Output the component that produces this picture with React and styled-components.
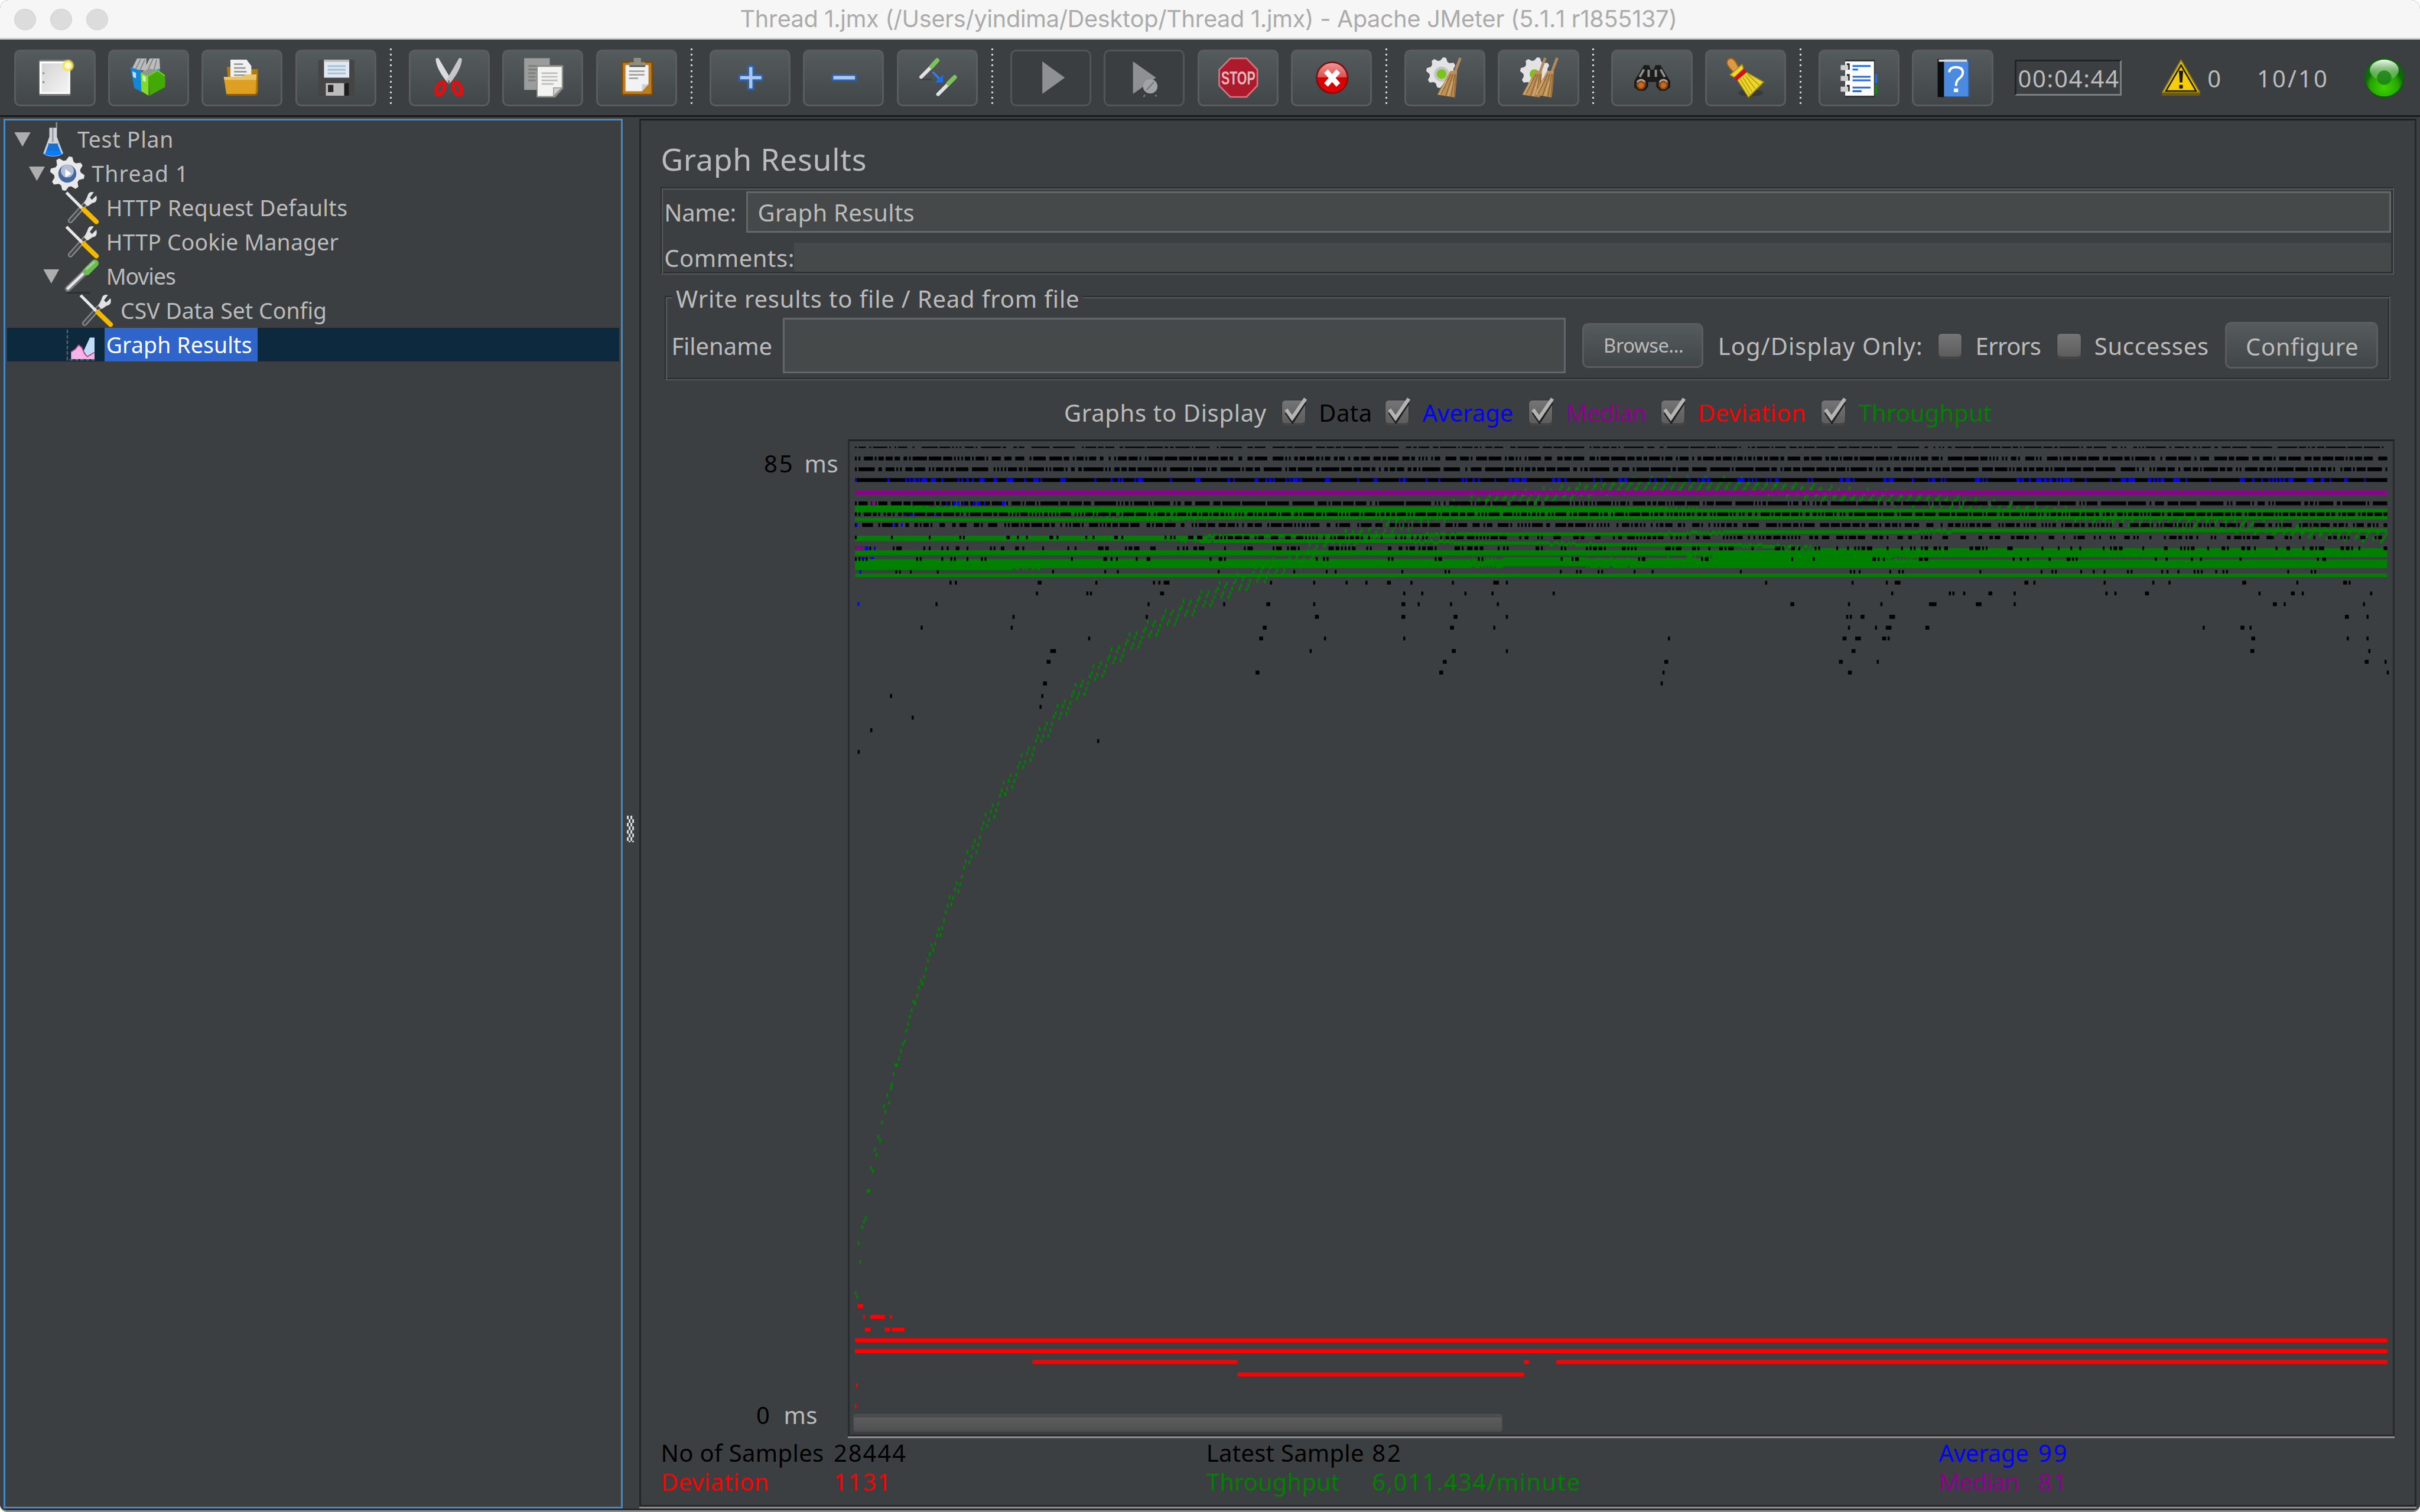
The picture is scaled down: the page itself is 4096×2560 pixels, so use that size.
import React, { useLayoutEffect, useRef, useState } from "react";
import styled, { createGlobalStyle, css } from "styled-components";

/* Sizes are written in the window's native pixels and scaled to the viewport. */
const K = 4096 / 5376;
const r = (n) => `${(n * K).toFixed(3)}px`;

const C = {
  bg: "#3c3f41",
  text: "#bbbbbb",
  dark: "#1e2022",
  line: "#292b2d",
  etchDark: "#2b2d2e",
  etchLight: "#555759",
  field: "#45494a",
  fieldBorder: "#646667",
  blue: "#0000ff",
  purple: "#8f008f",
  red: "#ff0000",
  green: "#008000",
};

const Global = createGlobalStyle`
  * { box-sizing: border-box; }
  html, body { margin: 0; padding: 0; background: #ffffff; overflow: hidden; }
`;

/* ---------- text ---------- */

const TextBox = styled.span`
  display: inline-block;
  flex: none;
  width: ${(p) => (p.$w ? r(p.$w) : "auto")};
  padding-top: ${(p) => (p.$ui || p.$size < 50 ? 0 : r(3))};
  font-family: ${(p) => (p.$ui ? "Inter, sans-serif" : '"Noto Sans", "Open Sans", sans-serif')};
  font-kerning: ${(p) => (p.$ui ? "none" : "auto")};
  font-size: ${(p) => r(p.$size)};
  line-height: 1;
  color: ${(p) => p.$color};
  white-space: pre;
`;

function Text({ w, size = 52.5, color = C.text, ui, children }) {
  const ref = useRef(null);
  const [spacing, setSpacing] = useState(0);
  useLayoutEffect(() => {
    if (!w || !ref.current) return;
    const natural = ref.current.getBoundingClientRect().width - spacing * children.length;
    setSpacing((w * K - natural) / Math.max(1, children.length - 1));
  }, [w, children]);
  return (
    <TextBox $w={w} $size={size} $color={color} $ui={ui}>
      <span ref={ref} style={{ letterSpacing: spacing }}>{children}</span>
    </TextBox>
  );
}

/* ---------- window ---------- */

const Window = styled.div`
  width: ${r(5376)};
  height: ${r(3360)};
  display: flex;
  flex-direction: column;
  background: ${C.bg};
  border-radius: ${r(20)} ${r(20)} ${r(16)} ${r(16)};
  border-bottom: ${r(4)} solid #8b8b8b;
  overflow: hidden;
`;

const TitleBar = styled.header`
  height: ${r(88)};
  flex: none;
  display: flex;
  align-items: center;
  background: #f6f6f6;
  border-bottom: ${r(4)} solid #cfd1cf;
  padding-left: ${r(32)};
  padding-top: ${r(3)};
`;

const Lights = styled.div`
  display: flex;
  gap: ${r(32)};
  width: ${r(1612)};
`;

const Light = styled.i`
  width: ${r(48)};
  height: ${r(48)};
  border-radius: 50%;
  background: #dcdcdc;
  border: ${r(2)} solid #cfcfcf;
`;

const Toolbar = styled.div`
  height: ${r(172)};
  flex: none;
  display: flex;
  align-items: center;
  gap: ${r(28)};
  padding-left: ${r(32)};
  padding-top: ${r(2)};
  border-bottom: ${r(4)} solid #17191b;
`;

const raised = css`
  background: linear-gradient(#555a5c, #414648);
  border: ${r(4)} solid #5a5c5d;
  border-radius: ${r(13)};
`;

const ToolButton = styled.button`
  ${raised}
  width: ${r(180)};
  height: ${r(126)};
  flex: none;
  padding: 0;
  display: flex;
  align-items: center;
  justify-content: center;
  ${(p) => p.$off && `background: #3b3e40; border-color: #525456;`}
`;

const IconSvg = styled.svg`
  width: ${(p) => r(p.$s || 88)};
  height: ${(p) => r(p.$s || 88)};
  display: block;
  flex: none;
  overflow: visible;
`;

const Separator = styled.i`
  width: ${r(16)};
  height: ${r(128)};
  flex: none;
  margin-top: ${r(-4)};
  background: repeating-linear-gradient(#d4d4d4 0 ${r(4)}, transparent ${r(4)} ${r(12)}) ${r(2)} 0 / ${r(4)} 100% no-repeat;
`;

const Timer = styled.div`
  width: ${r(238)};
  height: ${r(80)};
  margin-left: ${r(20)};
  display: flex;
  align-items: center;
  justify-content: center;
  border-style: solid;
  border-width: ${r(4)};
  border-color: #202224 #7b7f81 #7b7f81 #202224;
`;

const Status = styled.div`
  display: flex;
  align-items: center;
  margin-left: ${(p) => r(p.$ml)};
  gap: ${r(15)};
`;

/* ---------- body ---------- */

const Body = styled.div`
  flex: 1;
  min-height: 0;
  display: flex;
  padding: ${r(4)} ${r(8)} 0 ${r(8)};
  border-bottom: ${r(4)} solid ${C.line};
`;

const Tree = styled.ul`
  margin: 0;
  list-style: none;
  width: ${r(1376)};
  flex: none;
  border: ${r(4)} solid #4389c9;
  padding: ${r(4)};
`;

const TreeRow = styled.li`
  height: ${r(76)};
  display: flex;
  align-items: center;
  padding-left: ${(p) => r(16 + 32 * p.$depth)};
  background: ${(p) => (p.$selected ? "#0d293e" : "transparent")};
`;

const Arrow = styled.i`
  width: ${r(36)};
  height: ${r(32)};
  margin-right: ${r(12)};
  background: ${(p) => (p.$open ? "#adadad" : "transparent")};
  clip-path: polygon(0 0, 100% 0, 50% 100%);
`;

const TreeLabel = styled.span`
  height: 100%;
  display: flex;
  align-items: center;
  margin-left: ${r(12)};
  padding: 0 ${r(12)} 0 ${r(4)};
  background: ${(p) => (p.$selected ? "#2f65ca" : "transparent")};
`;

const Splitter = styled.div`
  width: ${r(36)};
  flex: none;
  display: flex;
  align-items: center;
  justify-content: center;
  padding-top: ${r(68)};
  padding-right: ${r(4)};
`;

const Main = styled.main`
  flex: 1;
  display: flex;
  flex-direction: column;
  border: ${r(4)} solid #242628;
  border-top-color: ${C.dark};
  box-shadow: 0 ${r(4)} 0 #8b8b8b;
  margin-bottom: ${r(4)};
  padding: 0 ${r(44)};
`;

const Heading = styled.div`
  height: ${r(148)};
  flex: none;
  display: flex;
  align-items: center;
  padding: ${r(22)} 0 0 ${r(0)};
`;

const etched = css`
  border-style: solid;
  border-width: ${r(3)};
  border-color: ${C.etchDark} ${C.etchLight} ${C.etchLight} ${C.etchDark};
  box-shadow: inset ${r(3)} ${r(3)} 0 ${C.etchLight}, inset ${r(-3)} ${r(-3)} 0 ${C.etchDark};
`;

const NameBox = styled.section`
  ${etched}
  height: ${r(194)};
  flex: none;
  margin-right: ${r(2)};
  padding: ${r(7)} ${r(4)} 0 ${r(5)};
  display: flex;
  flex-direction: column;
  gap: ${r(22)};
`;

const FormRow = styled.label`
  display: flex;
  align-items: center;
  height: ${(p) => r(p.$h)};
  gap: ${(p) => r(p.$gap)};
`;

const Field = styled.div`
  flex: ${(p) => (p.$w ? "none" : 1)};
  width: ${(p) => (p.$w ? r(p.$w) : "auto")};
  height: 100%;
  margin-left: ${(p) => r(p.$ml || 0)};
  display: flex;
  align-items: center;
  background: ${C.field};
  border: ${(p) => (p.$plain ? "0" : `${r(4)} solid ${C.fieldBorder}`)};
  padding-left: ${r(22)};
`;

const FileBox = styled.section`
  ${etched}
  position: relative;
  height: ${r(188)};
  flex: none;
  margin: ${r(48)} ${r(10)} 0 ${r(8)};
  padding: ${r(45)} 0 0 ${r(13)};
`;

const Legend = styled.span`
  position: absolute;
  top: ${r(-28)};
  left: ${r(15)};
  padding: 0 ${r(8)} 0 ${r(8)};
  background: ${C.bg};
  height: ${r(60)};
  display: flex;
  align-items: center;
`;

const FileRow = styled.div`
  height: ${r(124)};
  display: flex;
  align-items: center;
`;

const Button = styled.button`
  ${raised}
  width: ${(p) => r(p.$w)};
  height: ${(p) => r(p.$h)};
  margin: 0 ${(p) => r(p.$mr || 0)} 0 ${(p) => r(p.$ml)};
  padding: ${r(2)} 0 0 ${r(3)};
  flex: none;
  display: flex;
  align-items: center;
  justify-content: center;
`;

const CheckWrap = styled.label`
  display: flex;
  align-items: center;
  gap: ${r(29)};
  margin-left: ${(p) => r(p.$ml)};
`;

const CheckBox = styled.span`
  width: ${r(54)};
  height: ${r(54)};
  border-radius: ${r(9)};
  border: ${r(2)} solid #323435;
  background: linear-gradient(#757575, #5c5c5c);
  box-shadow: 0 ${r(3)} 0 #47494a;
  display: flex;
  align-items: center;
  justify-content: center;
`;

const GraphsRow = styled.div`
  height: ${r(130)};
  flex: none;
  display: flex;
  align-items: center;
  padding: ${r(9)} 0 0 ${r(896)};
`;

const ChartRow = styled.div`
  height: ${r(2220)};
  flex: none;
  display: flex;
`;

const Axis = styled.div`
  width: ${r(416)};
  flex: none;
  display: flex;
  flex-direction: column;
  justify-content: space-between;
  padding: ${r(25)} 0 ${r(25)};
`;

const AxisLabel = styled.div`
  display: flex;
  gap: ${(p) => r(p.$gap)};
  padding-left: ${(p) => r(p.$pl)};
`;

const ChartPanel = styled.div`
  flex: 1;
  display: flex;
  flex-direction: column;
  border: ${r(4)} solid ${C.line};
  border-top-color: ${C.dark};
  box-shadow: 0 ${r(4)} 0 #8b8b8b;
  margin-bottom: ${r(4)};
  padding-left: ${r(8)};
`;

const ChartSvg = styled.svg`
  width: ${r(3420)};
  height: ${r(2160)};
  display: block;
`;

const ScrollThumb = styled.div`
  width: ${r(1442)};
  height: ${r(40)};
  margin-top: ${r(2)};
  border: ${r(3)} solid #4c4e4f;
  border-radius: ${r(6)};
  background: linear-gradient(#4a4b4c 0 ${r(5)}, #5d5d5d ${r(6)}, #505050);
`;

const Stats = styled.div`
  display: grid;
  grid-template-columns: ${r(384)} ${r(828)} ${r(368)} ${r(1259)} ${r(221)} 1fr;
  grid-auto-rows: ${r(64)};
  align-items: center;
`;

/* ---------- toolbar icons ---------- */

const Bristles = ({ x }) => (
  <g transform={`translate(${x} 0)`}>
    <path d="M19.6 0 16.6 8" stroke="#b08a5c" strokeWidth="1.5" />
    <path d="M14 7.2h3.8l-.3 5L16.6 22l-9.8-1.6z" fill="#bd9056" />
    <path d="M14.5 9 8.8 20M15.5 9l-4 12M16.5 9l-2 12.6M17.3 9l-1.2 12.6" stroke="#8a6236" strokeWidth=".5" />
    <path d="M12 12.5 8 20.4M15.4 13l-2.6 8" stroke="#dcb47a" strokeWidth=".5" />
  </g>
);

const teeth = (n, cx, cy, r1, r2) =>
  Array.from({ length: n * 4 }, (_, i) => {
    const a = ((i + 0.5) / (n * 4)) * Math.PI * 2;
    const rad = i % 4 < 2 ? r1 : r2;
    return `${(cx + rad * Math.cos(a)).toFixed(2)},${(cy + rad * Math.sin(a)).toFixed(2)}`;
  }).join(" ");

const ICONS = {
  new: (
    <>
      <defs>
        <linearGradient id="pg" x2="1" y2="1"><stop stopColor="#d4d4d4" /><stop offset="1" stopColor="#f4f4f4" /></linearGradient>
        <radialGradient id="glow"><stop offset=".3" stopColor="#fffde0" /><stop offset=".65" stopColor="#f3e34f" /><stop offset="1" stopColor="#f3e34f" stopOpacity="0" /></radialGradient>
      </defs>
      <path d="M2.4 1h17.4v20H2.4z" fill="#7d7d7b" />
      <path d="M2.6 2h17v18h-17z" fill="#fff" />
      <path d="M3.8 3h15v16h-15z" fill="url(#pg)" />
      <path d="M4.3 8.5h1M4.3 13.5h1" stroke="#8b8b8b" />
      <circle cx="18.4" cy="4.3" r="3.7" fill="url(#glow)" />
    </>
  ),
  templates: (
    <>
      <path d="M1.5 6.5 4.6.3h5.2L9.6 7zM8 7.5 11.6.3H17l.4 6-4 3z" fill="#bcbcbc" />
      <path d="M3.4 7 6.6.8M6 7.4 8.8 1M10 8l3.4-7.4M13.5 8.5 15.5 1" stroke="#858585" strokeWidth=".6" />
      <path d="M.8 5 7.5 7.5V19l-4.4-2.2z" fill="#1486d8" />
      <path d="M2 7.5l2 .8v3l-1.6-.6z" fill="#bfe4ff" />
      <path d="M13 7.3l4-1.5V9l-3 1z" fill="#2c95dd" />
      <path d="M6.6 8.2 11 10v11L7 18.5z" fill="#7fdc2a" />
      <path d="M6.6 8.2 11.4 6l4.6 1-5 3z" fill="#8d9a8a" />
      <path d="M11 10l5-3 4.2 3.4v5.8L11.5 21z" fill="#43a905" />
      <path d="M7.6 9.6l1.8.8v3l-1.6-.7z" fill="#d9f7b4" />
      <path d="M11 10l5-3 4 3" fill="none" stroke="#6bd419" strokeWidth=".7" />
    </>
  ),
  open: (
    <>
      <path d="M2.6 5h5L9 6.2h10.8v13L18 21H4z" fill="#b5780b" />
      <path d="M4.6 1h9l2.6 3.5V13H4.6z" fill="#f1f1f1" />
      <path d="M6.6 3.5h5M6.6 5.6h6.4M6.6 7.7h7M6.6 9.6h7.6" stroke="#9a9a9a" strokeWidth=".9" />
      <path d="M.9 10.6h10l2-1.4h6.2l-.6 11.2H2.4z" fill="#dda022" />
      <path d="M.9 10.6h10l2-1.4h6.2l-.2 3H1.2z" fill="#ecc464" />
      <path d="M2.4 20h16.2l1.2-1-.4 1.9H2.6z" fill="#8d5c05" />
    </>
  ),
  save: (
    <>
      <rect x="1.3" y="1" width="20" height="20" rx="1" fill="#474446" />
      <path d="M4.4 1h14v10h-14z" fill="#dfe9f4" />
      <path d="M4.4 1h14v1.2h-14z" fill="#b9babd" />
      <path d="M6.4 4.6h10M6.4 6.6h10M6.4 8.6h10" stroke="#a9bfd4" strokeWidth="1" />
      <path d="M5.4 14h11.4v7H5.4z" fill="#bdbdbd" />
      <path d="M6.6 15h3v4h-3z" fill="#2a2829" />
      <path d="M15.6 14h2.6v7h-2.6z" fill="#1f1e1f" />
    </>
  ),
  cut: (
    <>
      <path d="M3.4.4 4.9 0 12.4 12.6 10 13.8C6.6 9.6 3.6 5 3.4.4z" fill="#dcdcdc" />
      <path d="M18 .4 16.5 0 9.2 12.6l2.4 1.2C15 9.6 17.8 5 18 .4z" fill="#c6c6c6" />
      <path d="M10.7 12.5v2" stroke="#777" />
      <ellipse cx="6" cy="17" rx="2" ry="3.6" transform="rotate(26 6 17)" fill="none" stroke="#d81313" strokeWidth="2.3" />
      <ellipse cx="15.4" cy="17" rx="2" ry="3.6" transform="rotate(-26 15.4 17)" fill="none" stroke="#d81313" strokeWidth="2.3" />
    </>
  ),
  copy: (
    <>
      <path d="M.7.2h14.2v17.6H.7z" fill="#9b9c9c" />
      <path d="M3 4.5h9M3 6.5h5M3 8.5h4M3 10.5h4M3 12.5h4" stroke="#7c7d7d" strokeWidth=".9" />
      <path d="M7.6 4h14.8v13L18 22H7.6z" fill="#8e8f89" />
      <path d="M8.2 5h13.4v11.4L17 21.2H8.2z" fill="#f3f3f1" />
      <path d="M10.4 8.5h8.8M10.4 10.5h8.8M10.4 12.5h8.8M10.4 14.5h6.6" stroke="#bdbdbb" strokeWidth=".9" />
      <path d="M17 21.2v-4.6h4.6z" fill="#cfcfca" stroke="#8e8f89" strokeWidth=".4" />
    </>
  ),
  paste: (
    <>
      <rect x="2.6" y="2" width="17.4" height="19" rx=".8" fill="#7a4c08" />
      <rect x="3.4" y="2.8" width="15.8" height="17.2" fill="#bd7b22" />
      <path d="M4.8 4h12.8v10.5L14 18.5H4.8z" fill="#f2f2f2" />
      <path d="M6.8 7.4h8.6M6.8 9.4h8.6M6.8 11.4h5" stroke="#a3a3a3" strokeWidth=".9" />
      <path d="M14 18.5v-3.8h3.6z" fill="#cfcfcf" />
      <path d="M7 5V2.4h2.4V0h4v2.4h2.4V5z" fill="#8e8e82" />
      <path d="M7 4.2h8.8V5H7z" fill="#55554e" />
    </>
  ),
  plus: (
    <>
      <path d="M9.4 4h4v5h5v4h-5v5h-4v-5h-5V9h5z" fill="#2f62aa" />
      <path d="M10.5 5.1h1.8v5h5v1.8h-5v5h-1.8v-5h-5v-1.8h5z" fill="#a9c8ee" />
    </>
  ),
  minus: (
    <>
      <path d="M4.4 9h14v4h-14z" fill="#2f62aa" />
      <path d="M5.4 10h12v2h-12z" fill="#a9c8ee" />
    </>
  ),
  toggle: (
    <>
      <path d="M1.8 12h6" stroke="#3a3e40" strokeWidth=".8" />
      <path d="M2 10.6 7.6 5" stroke="#e2e2e2" strokeWidth="2" strokeLinecap="round" />
      <path d="M7.8 4.8 10.9 1.4" stroke="#7cc35a" strokeWidth="2.5" strokeLinecap="round" />
      <path d="M11.4 20.2 17 14.6" stroke="#e2e2e2" strokeWidth="2" strokeLinecap="round" />
      <path d="M17.2 14.2 20.6 10.8" stroke="#7cc35a" strokeWidth="2.5" strokeLinecap="round" />
      <path d="M8.4 7.8 12.4 12" stroke="#2f7ff0" strokeWidth="1.2" />
      <path d="M14.2 9.2v4.5H9.6z" fill="#1a6ff0" />
    </>
  ),
  play: <path d="M6.3 2v18L18.8 11z" fill="#8f9091" />,
  playTimer: (
    <>
      <path d="M4.8 2v18L17.6 11z" fill="#8f9091" />
      <circle cx="14.4" cy="15.8" r="4" fill="#a2a3a4" />
      <path d="M12.4 17.8 16.4 13.4M11.6 20.6l-1 1M17.2 20.6l.8.8" stroke="#7b7c7d" strokeWidth=".8" />
    </>
  ),
  stop: (
    <>
      <path d="M6.7.3h9L21.7 6.6v8.8l-6 6.3h-9L.5 15.4V6.6z" fill="#ad1a2c" stroke="#cc7680" strokeWidth=".9" />
      <text x="11.1" y="14.7" textAnchor="middle" fontFamily="Liberation Sans, sans-serif" fontWeight="700" fontSize="10.4" textLength="19" lengthAdjust="spacingAndGlyphs" fill="#eab4bb">STOP</text>
    </>
  ),
  shutdown: (
    <>
      <defs><linearGradient id="sd" x2="0" y2="1"><stop stopColor="#ef9a9a" /><stop offset=".48" stopColor="#e05050" /><stop offset=".5" stopColor="#d40000" /><stop offset="1" stopColor="#e80000" /></linearGradient></defs>
      <circle cx="11.4" cy="11" r="8.6" fill="url(#sd)" stroke="#7c1010" strokeWidth=".9" />
      <path d="M8 7.4 14.8 15M14.8 7.4 8 15" stroke="#fff" strokeWidth="2.9" />
    </>
  ),
  clear: (
    <>
      <polygon points={teeth(8, 9.2, 8.2, 8.6, 6.8)} fill="#e3e3e3" />
      <circle cx="9.2" cy="9" r="4.2" fill="#c4c4c4" />
      <circle cx="9.2" cy="9" r="2.7" fill="#7cc41c" />
      <Bristles x={0} />
    </>
  ),
  clearAll: (
    <>
      <polygon points={teeth(8, 9.2, 8.2, 8.6, 6.8)} fill="#e3e3e3" />
      <circle cx="8.6" cy="9" r="2.7" fill="#7cc41c" />
      <Bristles x={-5} />
      <Bristles x={1.6} />
    </>
  ),
  search: (
    <>
      <path d="M6.4 4h2.8l1 2.6h1.6l1-2.6h2.8l5.4 9v3.4l-2.6 1.8h-3.2L13.2 16v-2.6h-4.4V16l-2 2.2H3.6L1 16.4V13z" fill="#1c1c1c" />
      <path d="M6.4 6.4 4 10.6M9 6.6v4M15.6 6.4l2.4 4.2M13 6.6v4" stroke="#8c8c8c" strokeWidth="1.3" />
      <ellipse cx="4.8" cy="14.6" rx="3" ry="3.3" fill="#8a4a18" stroke="#1c1c1c" strokeWidth=".7" />
      <ellipse cx="17.2" cy="14.6" rx="3" ry="3.3" fill="#8a4a18" stroke="#1c1c1c" strokeWidth=".7" />
      <path d="M2.6 13.4q2.2-2.4 4.4 0M15 13.4q2.2-2.4 4.4 0" stroke="#b9a090" strokeWidth=".9" fill="none" />
      <ellipse cx="4.8" cy="15.2" rx="1.5" ry="1.5" fill="#c96a1e" />
      <ellipse cx="17.2" cy="15.2" rx="1.5" ry="1.5" fill="#c96a1e" />
    </>
  ),
  broom: (
    <>
      <ellipse cx="14" cy="19.4" rx="7" ry="2" fill="#2e3233" opacity=".6" />
      <path d="M.6 2.6Q.8.2 3.2.2 5.4.8 7.6 6.4L5 8.6Q.6 4.6.6 2.6z" fill="#dc9a44" stroke="#9a5d17" strokeWidth=".7" />
      <path d="M2.4 9.4 9 3.6 10.4 7.4 21 13.4 12.6 21.8 6 11.6z" fill="#ecd829" stroke="#a89012" strokeWidth=".6" />
      <path d="M8 11.6l5.4 8.8M9.6 11l5 8M11 10l5.4 7.2M12 9l6.6 6.2" stroke="#b49b14" strokeWidth=".5" />
      <path d="M4.6 10.8 10 5.8 11.6 8 6 12.8z" fill="#cf1414" />
    </>
  ),
  notebook: (
    <>
      <path d="M18.5 9h2.6v5h-2.6z" fill="#2a6fe0" />
      <path d="M18.5 15h2.6v5h-2.6z" fill="#118a12" />
      <path d="M3.3 1h16.6v21H3.3z" fill="#33373a" />
      <path d="M3.3 2h16v19h-16z" fill="#fbfbfb" />
      <path d="M4.2 3h1.6v3.6H4.2zM4.2 9h1.6v3.6H4.2zM4.2 15h1.6v3.6H4.2z" fill="#222" />
      <path d="M.8 4h4.2v2.8H.8zM.8 10h4.2v2.8H.8zM.8 16h4.2v2.8H.8z" fill="#cfcfcf" />
      <path d="M7.4 4.5h10M7.4 6.5h3M7.4 10.5h10M7.4 12.5h10M7.4 16.5h10M7.4 18.5h5" stroke="#2268e8" strokeWidth="1" />
    </>
  ),
  help: (
    <>
      <path d="M2.8.4h18v21.2h-18z" fill="#39597f" />
      <path d="M2.8.6h3.6v21.2H2.8z" fill="#0c0d0e" />
      <path d="M6.4 2h13.4v19.4H6.4z" fill="#4a8ae0" />
      <path d="M3.4.9h15.8v1.2H3.4z" fill="#dcdcdc" />
      <path d="M9.2 8Q9.4 5.2 13 5.2T16.8 8Q16.8 10 14.6 11.6 13 13 13 15.6" stroke="#fff" strokeWidth="1.3" fill="none" />
      <path d="M11.8 17h2.4v2h-2.4z" fill="#fff" />
    </>
  ),
};

const WarningIcon = () => (
  <IconSvg viewBox="0 0 22 22">
    <path d="M11 1.2 21.6 19.6V21H.4V19.6z" fill="#6b5a10" />
    <path d="M11 1.2 21.4 19.2H.6z" fill="#f4cf08" stroke="#8f7a0c" strokeWidth=".7" strokeLinejoin="round" />
    <path d="M11 4 19.4 18.4H2.6z" fill="none" stroke="#2a2405" strokeWidth=".9" />
    <path d="M10.1 7.4h1.8l-.4 6h-1z" fill="#1b1804" stroke="#1b1804" strokeWidth=".5" />
    <path d="M10 15h2v2h-2z" fill="#1b1804" />
  </IconSvg>
);

const BallIcon = () => (
  <IconSvg viewBox="0 0 22 22">
    <defs>
      <radialGradient id="ball" cy=".75"><stop stopColor="#3fd400" /><stop offset=".75" stopColor="#26a400" /><stop offset="1" stopColor="#0c6a08" /></radialGradient>
      <linearGradient id="shine" x2="0" y2="1"><stop stopColor="#f2faee" /><stop offset="1" stopColor="#6cc35c" stopOpacity=".35" /></linearGradient>
    </defs>
    <circle cx="11" cy="11" r="10.7" fill="url(#ball)" stroke="#0b6208" strokeWidth=".6" />
    <ellipse cx="11" cy="6.8" rx="8" ry="5.8" fill="url(#shine)" />
    <circle cx="11" cy="11" r="4" fill="#1a7d16" opacity=".8" />
  </IconSvg>
);

/* ---------- tree icons (19 x 19) ---------- */

const TREE_ICONS = {
  flask: (
    <>
      <path d="M11.4 0v3" stroke="#8a8f93" strokeWidth=".8" />
      <path d="M7.4 3h4.2v5l3.4 9.4Q13 19 9.5 19T4 17.4L7.4 8z" fill="#cfd4da" />
      <path d="M6.6 11.8h5.8l2.2 5.6Q12.6 18.6 9.5 18.6T4.4 17.4z" fill="#1272d8" />
      <path d="M5 15.8h9l.5 1.8Q12 18.8 9.5 18.8T4.5 17.6z" fill="#0a7cff" />
      <path d="M9.3 3v8" stroke="#8f979e" strokeWidth=".8" />
      <path d="M6.6 12 4.6 17.4M12.4 12l2.2 5.4" stroke="#b9d6f7" strokeWidth=".9" />
    </>
  ),
  gear: (
    <>
      <polygon points={teeth(8, 9.5, 9.5, 9.6, 7.4)} fill="#e9e9e9" />
      <circle cx="9.5" cy="9.5" r="5" fill="#46689f" />
      <circle cx="9.5" cy="8" r="3.6" fill="#b4bfd4" />
      <path d="M8.4 7v4.6L11.8 9.5z" fill="#fff" />
    </>
  ),
  tools: (
    <>
      <path d="M3 16.6 12 6.6" stroke="#8c8c8c" strokeWidth="2.8" strokeLinecap="round" />
      <path d="M3 16.6 11 7.6" stroke="#474a4b" strokeWidth="1.4" strokeLinecap="round" />
      <path d="M17.4 2.6 15 5 13.8 3.8 16 .8Q13 0 12.4 3.2L10.6 7l2 1.6 2.6-1.8Q18.4 6.4 17.4 2.6z" fill="#e3e3e3" />
      <path d="M.8 1 9.8 10" stroke="#e8e8e8" strokeWidth="1.6" />
      <path d="M10.4 10.4 17.4 17.2" stroke="#f2b900" strokeWidth="2.7" strokeLinecap="round" />
    </>
  ),
  sampler: (
    <>
      <path d="M1 18.6h13" stroke="#2d3031" strokeWidth="1" />
      <path d="M1.6 16.4 11.6 6.8" stroke="#777b7d" strokeWidth="3.4" strokeLinecap="round" />
      <path d="M1.6 16.2 11.4 6.8" stroke="#e8e8e8" strokeWidth="1.5" strokeLinecap="round" />
      <path d="M12 6.8 16.6 2.2" stroke="#6cb955" strokeWidth="4.2" strokeLinecap="round" />
      <path d="M12 5.4 16.2 1.6" stroke="#9ad684" strokeWidth="1.2" strokeLinecap="round" />
    </>
  ),
  graph: (
    <>
      <path d="M1.3 1v16.8H17" stroke="#54606c" strokeWidth=".8" fill="none" strokeDasharray="2 1" />
      <path d="M16.4 5.4h-2.6l-3.4 7.4 2.4 4 3.6-2z" fill="#bfdcf8" />
      <path d="M3.4 17.4V13.4L5.6 12l2-2.4 1.6 1.2 1.8 3.8 1.4 1.4 4-2.4v3.8z" fill="#f5b4ea" />
      <path d="M3.4 13.4 5.6 12l2-2.4 1.6 1.2 1.8 3.8 1.4 1.4 4-2.4" fill="none" stroke="#c8467e" strokeWidth=".6" />
    </>
  ),
};

const ROWS = [
  { label: "Test Plan", icon: "flask", depth: 0, open: true, w: 213 },
  { label: "Thread 1", icon: "gear", depth: 1, open: true, w: 214 },
  { label: "HTTP Request Defaults", icon: "tools", depth: 2, w: 536 },
  { label: "HTTP Cookie Manager", icon: "tools", depth: 2, w: 516 },
  { label: "Movies", icon: "sampler", depth: 2, open: true, w: 155 },
  { label: "CSV Data Set Config", icon: "tools", depth: 3, w: 458 },
  { label: "Graph Results", icon: "graph", depth: 2, selected: true, w: 324 },
];

const TOOLS = [
  ["new", "templates", "open", "save"],
  ["cut", "copy", "paste"],
  ["plus", "minus", "toggle"],
  ["play", "playTimer", "stop", "shutdown"],
  ["clear", "clearAll"],
  ["search", "broom"],
  ["notebook", "help"],
];
const DISABLED = ["play", "playTimer"];

/* ---------- chart ---------- */

const X0 = 1900;
const X1 = 5304;

function random(seed) {
  let s = seed;
  return () => {
    s = (s * 1664525 + 1013904223) % 4294967296;
    return s / 4294967296;
  };
}

const box = (x, y, w, h) => `M${x} ${y}h${w}v${h}h${-w}z`;

function dashes(seed, y, maxRun, maxGap, h = 8.5, from = X0, to = X1) {
  const rnd = random(seed);
  let x = from;
  let d = "";
  while (x < to) {
    const run = 4 * (1 + Math.floor(rnd() ** 2 * maxRun));
    d += box(x, y, Math.min(run, to - x), h);
    x += run + 4 * (1 + Math.floor(rnd() ** 3 * maxGap));
  }
  return d;
}

/* Each stop is [x, top, bottom]; neighbouring levels mix around a stop. */
function band(seed, stops) {
  const rnd = random(seed);
  let d = "";
  let start = X0;
  let cur = stops[0];
  for (let x = X0; x <= X1; x += 4) {
    const probe = x + (rnd() - 0.5) * 130;
    let level = stops[0];
    for (const s of stops) if (probe >= s[0]) level = s;
    if (level !== cur || x + 4 > X1) {
      if (x > start) d += box(start, cur[1], x - start, cur[2] - cur[1]);
      start = x;
      cur = level;
    }
  }
  return d;
}

const CURVE = [
  [1908, 2761], [1920, 2712], [1930, 2645], [1938, 2597], [1946, 2559], [1954, 2529], [1960, 2494], [1966, 2464],
  [1974, 2441], [1980, 2412], [1986, 2379], [1994, 2356], [2004, 2325], [2012, 2284], [2023, 2253], [2036, 2209],
  [2056, 2150], [2072, 2102], [2088, 2063], [2108, 2009], [2125, 1970], [2148, 1913], [2164, 1880], [2190, 1826],
  [2207, 1796], [2232, 1752], [2271, 1694], [2309, 1638], [2355, 1580], [2389, 1541], [2431, 1497], [2470, 1461],
  [2508, 1430], [2552, 1400], [2590, 1376], [2647, 1346], [2692, 1323], [2736, 1302], [2768, 1289], [2807, 1272],
  [2900, 1235], [3000, 1195], [3100, 1165], [3200, 1138], [3300, 1118], [3400, 1103], [3480, 1095], [3560, 1083],
  [3700, 1075], [3850, 1077], [4000, 1090], [4100, 1099], [4200, 1106], [4300, 1114], [4400, 1126], [4500, 1134],
  [4700, 1150], [5304, 1190],
];
const RIPPLE = [12, 6, -6, -12, 20, 13, 5, -6, -10, -21];

/* The first marks of the throughput curve, before it settles into its ripple. */
const CURVE_START = [
  [1900, 2868], [1903, 2878], [1910, 2800], [1906, 2758], [1914, 2722], [1918, 2710], [1922, 2702], [1926, 2642],
  [1930, 2642], [1934, 2591], [1938, 2598], [1942, 2550], [1946, 2562], [1950, 2522], [1954, 2530], [1958, 2490],
  [1962, 2454], [1966, 2466], [1970, 2430], [1974, 2446], [1978, 2414],
];

function curve() {
  let d = CURVE_START.map(([x, y]) => box(x, y, 4, 8.5)).join("");
  let k = 0;
  for (let i = 20; X0 + i * 4 < X1; i++) {
    const x = X0 + i * 4;
    while (k < CURVE.length - 2 && CURVE[k + 1][0] < x) k++;
    const [ax, ay] = CURVE[k];
    const [bx, by] = CURVE[k + 1];
    const mid = ay + ((by - ay) * (x - ax)) / (bx - ax);
    const amp = x > 3300 ? 0.75 : Math.min(1, (x - 1900) / 260);
    d += box(x, (mid + RIPPLE[(i + 7) % 10] * amp - 4).toFixed(1), 4, 8.5);
  }
  return d;
}

const BANDS = [
  [11, [[0, 1122, 1138], [2080, 1126, 1138], [2260, 1126, 1142], [3640, 1126, 1138], [3760, 1130, 1138]]],
  [12, [[0, 1150, 1158], [2290, 1150, 1158], [2480, 1146, 1158], [2620, 1146, 1154]]],
  [13, [[0, 1190, 1202], [2190, 1190, 1198], [2700, 1186, 1194], [3200, 1182, 1190], [3770, 1178, 1186], [4280, 1174, 1182]]],
  [14, [[0, 1194, 1202], [2650, 1198, 1206], [3200, 1202, 1210], [3490, 1206, 1214], [3900, 1210, 1218], [3990, 1218, 1226]]],
  [15, [[0, 1222, 1234], [3760, 1222, 1240], [4240, 1218, 1238]]],
  [16, [[0, 1242, 1266], [2270, 1242, 1262], [3300, 1238, 1258], [3560, 1240, 1262], [4200, 1243, 1262]]],
  [17, [[0, 1274, 1282], [1950, 1274, 1282]]],
];

const OUTLIERS = {
  1290: [[2110], [2122], [2306, 8], [2434], [2562], [2574], [2586, 12], [2822], [2918], [2990], [3034], [3082, 8], [3134], [3226], [3318, 12], [3346], [3922], [4114], [4190], [4210, 12], [4498, 8], [4518], [4674], [4782], [4818], [4982, 8], [5102], [5206, 8], [5218]],
  1314: [[2302], [2414], [2422], [2578, 8], [3118], [3158], [3254], [3314], [3450], [4202], [4330], [4338], [4362], [4418, 8], [4474], [4678], [4698], [4766, 8], [5018], [5090, 8], [5114], [5266]],
  1338: [[2079], [2550], [2718], [2814, 8], [2918], [3114, 8], [3150], [3222], [3326], [3978, 8], [4106], [4178], [4286, 16], [4390, 12], [4474], [5050, 8], [5074], [5250]],
  1366: [[2250], [2546], [2922, 8], [3114, 8], [3230, 8], [3346], [4102], [4110], [4134, 8], [4198, 12], [5210, 8], [5258]],
  1390: [[2046], [2246], [2806, 8], [3222, 8], [3318], [4106], [4166], [4190, 12], [4278, 8], [4894], [4978, 8], [4998]],
  1414: [[2418], [2798, 8], [2942], [3118], [3706], [4094, 8], [4122, 12], [4182, 8], [4194], [5002, 8], [5214], [5258]],
  1442: [[2334, 12], [2910], [3226, 8], [3346], [4114, 8], [5000, 8], [5262]],
  1466: [[2326, 8], [3206, 8], [3698, 8], [4086, 8], [4170], [5254, 8], [5298]],
  1490: [[2790, 8], [3198, 8], [3694], [4106, 8], [5303]],
  1514: [[2318, 8], [3690]],
  1542: [[1978], [2314]],
  1566: [[2310]],
  1590: [[2026]],
  1618: [[1934]],
  1642: [[2438]],
  1666: [[1906]],
};

const GREEN_D = BANDS.map(([seed, stops]) => band(seed, stops)).join("") + curve();

const BLACK_D = [
  dashes(1, 992, 12, 4, 3),
  dashes(2, 1014, 8, 2.5),
  dashes(3, 1038, 11, 2.2),
  box(X0, 1062, X1 - X0, 8.5),
  dashes(4, 1114, 14, 2),
  dashes(5, 1138, 6, 2, 8),
  dashes(6, 1162, 6, 4),
  dashes(7, 1190, 2, 24, 8, X0, 2600),
  dashes(8, 1190, 4, 7, 8, 2600),
  dashes(9, 1214, 3, 16, 8),
  dashes(10, 1238, 2, 52, 8),
  dashes(20, 1266, 1, 70, 8, 1990),
  ...Object.entries(OUTLIERS).flatMap(([y, list]) => list.map(([x, w = 4]) => box(x, Number(y), w + 0.6, 8.6))),
].join("");

const BLUE_D =
  dashes(30, 1062, 3.2, 17) +
  [[2102, 1114], [2119, 1114], [2127, 1114], [2139, 1114], [2162, 1114], [2170, 1114, 8], [2186, 1114], [2226, 1114, 8],
    [2010, 1142], [2022, 1142], [2030, 1142], [2078, 1142], [1902, 1162], [1986, 1162], [2002, 1162], [1922, 1214, 8],
    [1942, 1214], [1914, 1238, 8], [1934, 1238, 8], [1910, 1266], [1906, 1338]]
    .map(([x, y, w = 4]) => box(x, y, w, y === 1142 || y === 1238 ? 4 : 8)).join("");

const PURPLE_D = box(X0, 1089.7, X1 - X0, 8.8) + box(1938, 1114, 8, 8) + box(1900, 1214, 20, 8);

const RED_D = [
  [1906, 2898, 12], [1918, 2922, 4], [1934, 2922, 32], [1978, 2922, 4], [1922, 2950, 12], [1966, 2950, 12], [1982, 2950, 28],
  [1900, 2974, 3404], [1900, 2998, 3404], [2294, 3022, 456], [3386, 3022, 12], [3458, 3022, 1846], [2750, 3050, 636],
  [1902, 3074, 4], [1900, 3121, 3],
].map(([x, y, w]) => box(x, y - 0.4, w, 8.8)).join("");

function Chart() {
  return (
    <ChartSvg viewBox="1896 980 3420 2160">
      <path d={GREEN_D} fill={C.green} />
      <path d={BLACK_D} fill="#000" />
      <path d={BLUE_D} fill={C.blue} />
      <path d={PURPLE_D} fill={C.purple} />
      <path d={RED_D} fill={C.red} />
    </ChartSvg>
  );
}

/* ---------- pieces ---------- */

function Check({ on, label, w, color, ml }) {
  return (
    <CheckWrap $ml={ml}>
      <CheckBox>
        {on && (
          <IconSvg $s={52} viewBox="0 0 13 13">
            <path d="M2.4 6.6 5.8 11.6 12.6 1" fill="none" stroke="#1f2122" strokeWidth="2" />
            <path d="M2.2 5 5.6 9.8 13-1" fill="none" stroke="#b4b4b4" strokeWidth="2" />
          </IconSvg>
        )}
      </CheckBox>
      <Text w={w} color={color}>{label}</Text>
    </CheckWrap>
  );
}

/* Alternate dots step sideways every row, giving the grip its slanted weave. */
function Grip() {
  let d = "";
  for (let y = 0; y < 15; y++) {
    const shift = [0, 2, 1, 3][y % 4] % 2 ? 1 : 0;
    for (let x = shift; x < 4; x += 2) d += box(x, y, 1, 1);
  }
  return (
    <svg width={16 * K} height={60 * K} viewBox="0 0 4 15">
      <path d={d} fill="#dedede" />
    </svg>
  );
}

export default function App() {
  return (
    <Window>
      <Global />
      <TitleBar>
        <Lights><Light /><Light /><Light /></Lights>
        <Text ui size={52} w={2082} color="#ababab">Thread 1.jmx (/Users/yindima/Desktop/Thread 1.jmx) - Apache JMeter (5.1.1 r1855137)</Text>
      </TitleBar>

      <Toolbar>
        {TOOLS.map((group, g) => (
          <React.Fragment key={g}>
            {g > 0 && <Separator />}
            {group.map((name) => (
              <ToolButton key={name} $off={DISABLED.includes(name)}>
                <IconSvg viewBox="0 0 22 22" fill="none">{ICONS[name]}</IconSvg>
              </ToolButton>
            ))}
          </React.Fragment>
        ))}
        <Timer><Text w={224}>00:04:44</Text></Timer>
        <Status $ml={59}><WarningIcon /><Text w={32}>0</Text></Status>
        <Status $ml={50}><Text w={156}>10/10</Text></Status>
        <Status $ml={55}><BallIcon /></Status>
      </Toolbar>

      <Body>
        <Tree>
          {ROWS.map((row) => (
            <TreeRow key={row.label} $depth={row.depth} $selected={row.selected}>
              <Arrow $open={row.open} />
              <IconSvg $s={76} viewBox="0 0 19 19" fill="none">{TREE_ICONS[row.icon]}</IconSvg>
              <TreeLabel $selected={row.selected}>
                <Text size={49} w={row.w} color={row.selected ? "#ffffff" : C.text}>{row.label}</Text>
              </TreeLabel>
            </TreeRow>
          ))}
        </Tree>
        <Splitter><Grip /></Splitter>

        <Main>
          <Heading><Text size={68} w={457}>Graph Results</Text></Heading>

          <NameBox>
            <FormRow $h={92} $gap={22}>
              <Text w={160}>Name:</Text>
              <Field><Text w={348}>Graph Results</Text></Field>
            </FormRow>
            <FormRow $h={64} $gap={0}>
              <Text w={289}>Comments:</Text>
              <Field $plain />
            </FormRow>
          </NameBox>

          <FileBox>
            <Legend><Text w={896}>Write results to file / Read from file</Text></Legend>
            <FileRow>
              <Text w={224}>Filename</Text>
              <Field $w={1740} $ml={23} />
              <Button $w={268} $h={100} $ml={37} $mr={33}><Text size={43} w={178}>Browse...</Text></Button>
              <Text w={454}>Log/Display Only:</Text>
              <Check ml={35} label="Errors" w={146} />
              <Check ml={35} label="Successes" w={254} />
              <Button $w={340} $h={104} $ml={36}><Text w={250}>Configure</Text></Button>
            </FileRow>
          </FileBox>

          <GraphsRow>
            <Text w={449}>Graphs to Display</Text>
            <Check on ml={34} label="Data" w={118} color="#000000" />
            <Check on ml={29} label="Average" w={202} color={C.blue} />
            <Check on ml={34} label="Median" w={179} color={C.purple} />
            <Check on ml={31} label="Deviation" w={240} color={C.red} />
            <Check on ml={34} label="Throughput" w={296} color={C.green} />
          </GraphsRow>

          <ChartRow>
            <Axis>
              <AxisLabel $pl={229} $gap={26}><Text w={64} color="#000000">85</Text><Text w={75}>ms</Text></AxisLabel>
              <AxisLabel $pl={212} $gap={29}><Text w={32} color="#000000">0</Text><Text w={75}>ms</Text></AxisLabel>
            </Axis>
            <ChartPanel>
              <Chart />
              <ScrollThumb />
            </ChartPanel>
          </ChartRow>

          <Stats>
            <Text w={362} color="#000000">No of Samples</Text>
            <Text w={160} color="#000000">28444</Text>
            <Text w={350} color="#000000">Latest Sample</Text>
            <Text w={64} color="#000000">82</Text>
            <Text w={200} color={C.blue}>Average</Text>
            <Text w={64} color={C.blue}>99</Text>
            <Text w={240} color={C.red}>Deviation</Text>
            <Text w={127} color={C.red}>1131</Text>
            <Text w={296} color={C.green}>Throughput</Text>
            <Text w={462} color={C.green}>6,011.434/minute</Text>
            <Text w={179} color={C.purple}>Median</Text>
            <Text w={64} color={C.purple}>81</Text>
          </Stats>
        </Main>
      </Body>
    </Window>
  );
}
